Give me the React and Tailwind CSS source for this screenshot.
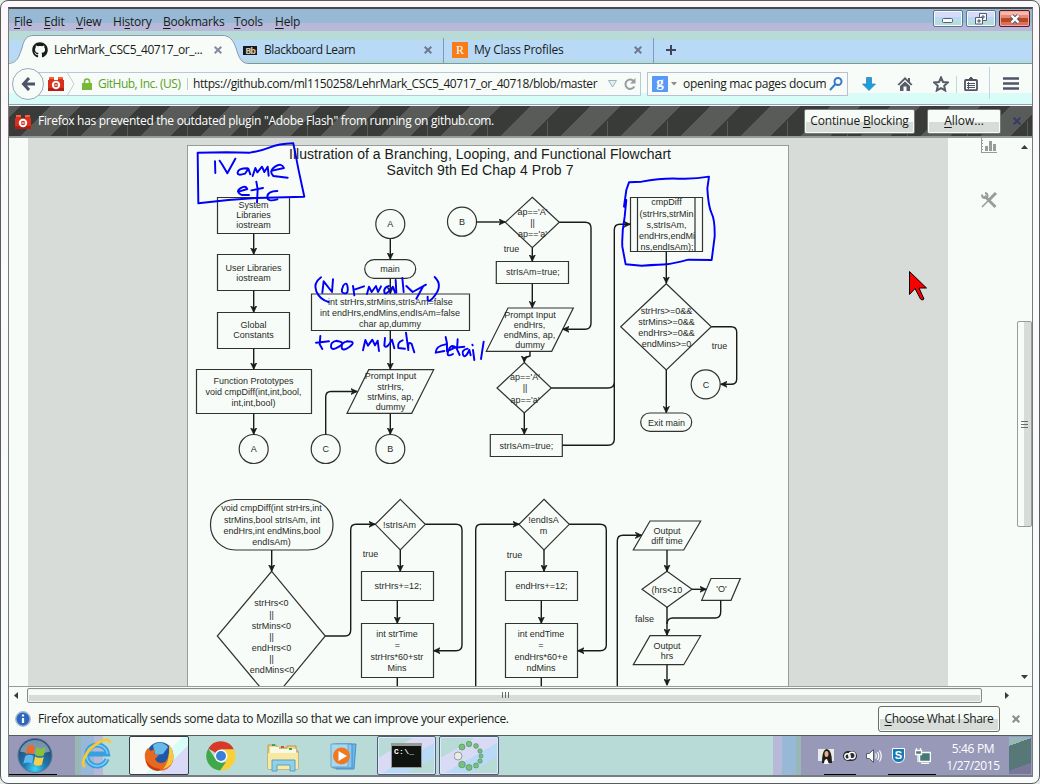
import React from "react";
import { FaGithub } from "react-icons/fa";

const menu = [
  ["File", "w-[30px]", 0],
  ["Edit", "w-[32px]", 0],
  ["View", "w-[37px]", 0],
  ["History", "w-[50px]", 2],
  ["Bookmarks", "w-[71px]", 0],
  ["Tools", "w-[41px]", 0],
  ["Help", "w-[40px]", 0],
];

function Access({ text, at }) {
  return (
    <>
      {text.slice(0, at)}
      <span className="underline underline-offset-2">{text[at]}</span>
      {text.slice(at + 1)}
    </>
  );
}

function Cross({ className }) {
  return (
    <svg viewBox="0 0 8 8" className={`h-2 w-2 shrink-0 ${className}`} fill="none" stroke="currentColor" strokeWidth="2">
      <path d="M.7 .7 7.3 7.3M7.3 .7 .7 7.3" />
    </svg>
  );
}

function Brick() {
  return (
    <svg viewBox="0 0 16 14" className="h-[14px] w-4 shrink-0">
      <path d="M1 3V1h5v2h4V1h5v2h1v11H0V3z" fill="#d8301c" />
      <path d="M1 0h5v2H1zM10 0h5v2h-5z" fill="#f86040" />
      <path d="M0 11h16v3H0z" fill="#b81c10" />
      <circle cx="8" cy="8" r="3.2" fill="#d8301c" stroke="#fff" strokeWidth="2" />
      <path d="M6.5 8h3" stroke="#fff" strokeWidth="1" />
    </svg>
  );
}

function WindowButtons() {
  return (
    <div className="flex gap-[3px]">
      <div className="flex h-[17px] w-[30px] items-center justify-center rounded-[2px] border border-[#587898] bg-[linear-gradient(#d8daf6_0_40%,#b8daf6_40%_70%,#b8dcd8_70%)] shadow-[inset_0_0_0_1px_#f0fcfc]">
        <svg viewBox="0 0 12 6" className="mt-1 h-[6px] w-3"><rect x=".5" y=".5" width="10" height="4" rx="1" fill="#f8fcf8" stroke="#585b78" /></svg>
      </div>
      <div className="flex h-[17px] w-[30px] items-center justify-center rounded-[2px] border border-[#587898] bg-[linear-gradient(#d8daf6_0_40%,#b8daf6_40%_70%,#b8dcd8_70%)] shadow-[inset_0_0_0_1px_#f0fcfc]">
        <svg viewBox="0 0 12 12" className="h-3 w-3" fill="#f8fcf8" stroke="#585b78">
          <path d="M4.500 .5h7v7h-7z M7 3h2v2H7z" fillRule="evenodd" />
          <path d="M.5 4.500h7v6.500h-7z M3 7h2v2H3z" fillRule="evenodd" />
        </svg>
      </div>
      <div className="flex h-[17px] w-[31px] items-center justify-center rounded-[2px] border border-[#581828] bg-[linear-gradient(#f8b8a8_0_25%,#e88878_25%_50%,#b84820_50%_72%,#d87060_72%)] shadow-[inset_0_0_0_1px_#f0a8a0]">
        <svg viewBox="0 0 12 10" className="h-[10px] w-3"><path d="M2.500 1.500 9.500 8.500M9.500 1.500 2.500 8.500" stroke="#585b78" strokeWidth="4.200" /><path d="M2.500 1.500 9.500 8.500M9.500 1.500 2.500 8.500" stroke="#fff" strokeWidth="2.400" /></svg>
      </div>
    </div>
  );
}

function Tabs() {
  return (
    <div className="relative h-[29px] shrink-0 bg-[linear-gradient(#b8dbd8_0_5px,#b8daf6_5px_25px,#b8dbd8_25px)] text-[12px]">
      <svg viewBox="0 0 1023 29" className="absolute left-0 top-0 h-[29px] w-[1023px]">
        <path d="M0 28.500H1023" stroke="#7098b8" />
        <path d="M0 29V27.500C9 27.500 10 21 13 13 15 4 18 .5 25 .5H213C221 .5 224 5 227 13 230 23 232 28.500 240 28.500V29Z" fill="#f8fcf8" />
        <path d="M0 28.500C9 27.500 10 21 13 13 15 4 18 .5 25 .5H213C221 .5 224 5 227 13 230 23 232 28.500 240 28.500" fill="none" stroke="#8898b8" />
        <path d="M434.500 3V28M644.500 3V28" stroke="#8098c0" />
      </svg>
      <div className="relative flex h-[29px] items-center pt-px">
        <FaGithub className="ml-[23px] h-4 w-4" />
        <span className="ml-[6px] w-[155px] whitespace-nowrap tracking-[-0.43px]">LehrMark_CSC5_40717_or_...</span>
        <Cross className="ml-[5px] text-[#8889a0]" />
        <span className="ml-[21px] flex h-[9px] w-[14px] items-center justify-center bg-[#181818] text-[9px] font-bold leading-none tracking-[-1px] text-[#d8c8a8]">Bb</span>
        <span className="ml-[7px] w-[160px] tracking-[-0.42px]">Blackboard Learn</span>
        <Cross className="text-[#707890]" />
        <span className="ml-[20px] flex h-4 w-4 items-center justify-center bg-[#f87c18] font-['Liberation_Serif',serif] text-[12px] text-white">R</span>
        <span className="ml-[6px] w-[160px] tracking-[-0.25px]">My Class Profiles</span>
        <Cross className="text-[#707890]" />
        <svg viewBox="0 0 10 10" className="ml-[24px] h-[10px] w-[10px]"><path d="M5 0V10M0 5H10" stroke="#404458" strokeWidth="2" /></svg>
      </div>
    </div>
  );
}

function Toolbar() {
  return (
    <div className="flex h-[41px] shrink-0 items-start border-b border-[#98a0b8] bg-[linear-gradient(#f8fcf8_0_29px,#d8fcf8_29px)] text-[12px]">
      <div className="z-10 ml-[3px] mt-1 flex h-[32px] w-[32px] shrink-0 items-center justify-center rounded-full border border-[#98a8c0] bg-[#f8fcf8]">
        <svg viewBox="0 0 14 14" className="h-[14px] w-[14px]" fill="none" stroke="#505468" strokeWidth="3"><path d="M8 1 2.500 7 8 13M3 7H14" /></svg>
      </div>
      <div className="-ml-[7px] mt-2 flex h-[24px] w-[604px] shrink-0 items-center border border-[#b8c8d8] bg-[#f8fcf8]">
        <div className="ml-[10px]"><Brick /></div>
        <svg viewBox="0 0 8 22" className="ml-[3px] h-[22px] w-2 shrink-0" fill="none" stroke="#c8ccd0"><path d="M.5 0 7 11 .5 22" /></svg>
        <svg viewBox="0 0 10 12" className="ml-[7px] h-3 w-[10px] shrink-0"><path d="M2.500 6V3.500a2.500 2.500 0 0 1 5 0V6" fill="none" stroke="#78b838" strokeWidth="1.600" /><path d="M0 5h10v7H0z" fill="#78b838" /></svg>
        <span className="ml-[6px] w-[89px] whitespace-nowrap tracking-[-0.5px] text-[#58a028]">GitHub, Inc. (US)</span>
        <span className="h-3 w-px bg-[#c8ccc8]" />
        <span className="ml-[5px] w-[409px] whitespace-nowrap tracking-[-0.41px]">https://github.com/ml1150258/LehrMark_CSC5_40717_or_40718/blob/master</span>
        <svg viewBox="0 0 9 8" className="ml-[6px] h-2 w-[9px] shrink-0"><path d="M.5 .5h8L4.500 7z" fill="#d8f4f4" stroke="#a8b0b8" /></svg>
        <svg viewBox="0 0 12 12" className="ml-[7px] h-3 w-3 shrink-0"><path d="M10 3.500A4.700 4.700 0 1 0 10.300 8.500" fill="none" stroke="#989ca0" strokeWidth="2" /><path d="M11.500 0V5.500H6z" fill="#989ca0" /></svg>
      </div>
      <div className="ml-[6px] mt-2 flex h-[24px] w-[201px] shrink-0 items-center overflow-hidden border border-[#b8c0d8] bg-[#f8fcf8]">
        <span className="ml-1 flex h-4 w-4 shrink-0 items-center justify-center rounded-[1px] bg-[#5898f8] pb-[3px] font-['Liberation_Serif',serif] text-[15px] font-bold leading-none text-white">g</span>
        <svg viewBox="0 0 6 4" className="ml-[3px] h-1 w-[6px] shrink-0"><path d="M0 0h6L3 3.500z" fill="#888c90" /></svg>
        <span className="ml-[6px] w-[143px] shrink-0 overflow-hidden whitespace-nowrap tracking-[-0.3px]">opening mac pages docum</span>
        <svg viewBox="0 0 14 14" className="ml-[3px] h-[14px] w-[14px] shrink-0" fill="none" stroke="#3878c8" strokeWidth="2"><circle cx="9" cy="4.500" r="3.500" /><path d="M6.500 7 1 13" /></svg>
      </div>
      <svg viewBox="0 0 14 14" className="ml-[14px] mt-[13px] h-[14px] w-[14px]"><path d="M4.500 .5h5V7H13.500L7 13.500.5 7H4.500z" fill="#18a0e0" stroke="#3878a0" strokeWidth=".7" /></svg>
      <svg viewBox="0 0 16 14" className="ml-[21px] mt-[13px] h-[14px] w-4" fill="#585b68"><path d="M8 0 .5 7.500 2 8.500 8 2.800 14 8.500 15.500 7.500 13 5V1H11V3z" /><path d="M3 9 8 4.500 13 9v5H9.500V9.500h-3V14H3z" /></svg>
      <svg viewBox="0 0 16 16" className="ml-[20px] mt-3 h-4 w-4"><path d="M8 1.500 10 6l4.800.5-3.600 3.300 1 4.700L8 12.200l-4.200 2.300 1-4.700L1.200 6.500 6 6z" fill="none" stroke="#585b68" strokeWidth="2" /></svg>
      <span className="ml-[7px] mt-3 h-[17px] w-px bg-[#b8dce0]" />
      <svg viewBox="0 0 14 14" className="ml-[7px] mt-[13px] h-[14px] w-[14px]" fill="none" stroke="#505460"><rect x="1" y="3" width="12" height="10.200" rx="1" strokeWidth="1.800" /><path d="M4.500 2.500 7 0 9.500 2.500z" fill="#505460" /><path d="M3 6.500h8M3 8.500h8M3 10.500h8M4.500 5v7" /></svg>
      <span className="ml-[11px] mt-[3px] h-[32px] w-px bg-[#c0d4e8]" />
      <svg viewBox="0 0 16 13" className="ml-[13px] mt-[13px] h-[13px] w-4"><path d="M0 1.500h16M0 6.500h16M0 11.500h16" stroke="#505468" strokeWidth="2.600" /></svg>
    </div>
  );
}

function PluginBar() {
  return (
    <div className="mt-px flex h-[32px] shrink-0 items-center border-b-2 border-[#989c98] [background:linear-gradient(90deg,transparent_58px,#585b58_58px_59px,transparent_59px)_0_100%/60px_15px_repeat-x,repeating-linear-gradient(135deg,#585b58_0_8.485px,#383b38_8.485px_29.698px,#585b58_29.698px_42.426px)] text-[12px]">
      <div className="ml-[6px] mt-px"><Brick /></div>
      <span className="ml-[7px] w-[766px] whitespace-nowrap tracking-[-0.3px] text-white">Firefox has prevented the outdated plugin "Adobe Flash" from running on github.com.</span>
      <span className="flex h-[25px] w-[111px] items-center justify-center whitespace-nowrap rounded-[2px] border border-[#787c78] bg-[linear-gradient(#f8fcf8_50%,#d8dcd8_50%)] shadow-[inset_0_0_0_1px_#f8fcf8]">
        <span className="tracking-[-0.15px]"><Access text="Continue Blocking" at={9} /></span>
      </span>
      <span className="ml-[12px] flex h-[25px] w-[74px] items-center justify-center rounded-[2px] border border-[#787c78] bg-[linear-gradient(#f8fcf8_50%,#d8dcd8_50%)] shadow-[inset_0_0_0_1px_#f8fcf8]">
        <span><Access text="Allow..." at={0} /></span>
      </span>
      <Cross className="ml-[12px] text-[#383b68]" />
    </div>
  );
}

const labels = [
  [253.5, 208, "System"], [253.5, 218, "Libraries"], [253.5, 228, "iostream"],
  [253.5, 270.5, "User Libraries"], [253.5, 280.5, "iostream"],
  [253.5, 328, "Global"], [253.5, 338, "Constants"],
  [253.5, 383.5, "Function Prototypes"], [253.5, 394.500, "void cmpDiff(int,int,bool,"], [253.5, 405.500, "int,int,bool)"],
  [253.7, 452, "A"], [325.7, 452, "C"], [390.3, 452, "B"], [390.3, 227, "A"], [462, 225, "B"],
  [390, 272, "main"],
  [390.5, 305, "int strHrs,strMins,strIsAm=false"], [390, 316, "int endHrs,endMins,endIsAm=false"], [390, 327, "char ap,dummy"],
  [390.5, 379, "Prompt Input"], [390.5, 389.500, "strHrs,"], [390.5, 399.500, "strMins, ap,"], [390.5, 410, "dummy"],
  [532.5, 215, "ap=='A'"], [532.5, 226, "||"], [532.5, 237, "ap=='a'"], [511.500, 252, "true"],
  [533, 275, "strIsAm=true;"],
  [530, 317.500, "Prompt Input"], [529.500, 327.500, "endHrs,"], [529.500, 337.500, "endMins, ap,"], [530, 348, "dummy"],
  [525, 380, "ap=='A'"], [525, 391, "||"], [525, 402.500, "ap=='a'"], [526.500, 448.500, "strIsAm=true;"],
  [666.500, 205, "cmpDiff"], [666.500, 216.500, "(strHrs,strMin"], [666.500, 227.500, "s,strIsAm,"], [667, 239, "endHrs,endMi"], [667, 250, "ns,endIsAm);"],
  [666.500, 313.500, "strHrs>=0&&"], [666.500, 324.500, "strMins>=0&&"], [666.500, 335.500, "endHrs>=0&&"], [666.500, 346.500, "endMins>=0"],
  [719.500, 349, "true"], [706, 387.500, "C"], [666.500, 425.500, "Exit main"],
  [271.500, 511, "void cmpDiff(int strHrs,int"], [272, 522.500, "strMins,bool strIsAm, int"], [272, 533.500, "endHrs,int endMins,bool"], [271.500, 544.500, "endIsAm)"],
  [271.500, 606, "strHrs<0"], [271.500, 617.500, "||"], [271.500, 628.500, "strMins<0"], [271.500, 640, "||"], [271.500, 651, "endHrs<0"], [271.500, 662, "||"], [272, 673, "endMins<0"],
  [399.500, 527.500, "!strIsAm"], [370.500, 557, "true"], [398, 588.500, "strHrs+=12;"],
  [397, 637, "int strTime"], [397.300, 648, "="], [397, 659.500, "strHrs*60+str"], [397, 671, "Mins"],
  [543.500, 522.500, "!endIsA"], [543.500, 534, "m"], [514.500, 557.500, "true"], [541.500, 588.500, "endHrs+=12;"],
  [541, 637, "int endTime"], [541, 648, "="], [541, 659.500, "endHrs*60+e"], [541, 671, "ndMins"],
  [667, 533.500, "Output"], [667, 543.500, "diff time"], [667, 592.500, "(hrs<10"], [721.500, 592, "'O'"], [644.500, 621.500, "false"],
  [667, 648.500, "Output"], [667, 658.500, "hrs"],
];

const shapes = [
  "M217.500 197.500H289.500V233.500H217.500z", "M217.500 254.500H289.500V290.500H217.500z", "M217.500 312.500H289.500V348.500H217.500z", "M196.500 369.500H311.500V413.500H196.500z",
  "M311.500 294H469.500V330.500H311.500z", "M368.700 369.700H433.700L411.700 413.300H347z",
  "M532.300 197.300 559.300 222.300 532.300 247.700 505.300 222.300z", "M496.300 261.500H568.500V283.500H496.300z",
  "M508 308H573.300L551.700 351.300H486.300z", "M524.300 362.500 551.300 388 524.300 413 497 388z", "M490.300 434.500H562.300V456.500H490.300z",
  "M630.500 197.500H702.500V251.500H630.500zM637.500 197.500V251.500M695 197.500V251.500",
  "M666.300 283.700 711.300 326.700 666.300 370 620.700 326.700z",
  "M271.700 571.300 325.300 636 271.700 701 217.300 636z", "M400.300 499.300 425.300 524.300 400.300 550 375.300 524.300z",
  "M361.500 571.500H433.500V600.500H361.500z", "M361.500 623.500H433.500V677.500H361.500z",
  "M544 499.300 569.300 524.300 544 550 519 524.300z", "M505.500 571.500H577.500V600.500H505.500z", "M505.500 623.500H577.500V677.500H505.500z",
  "M650 521H700.700L683.700 550H633.300z", "M667 571.300 692 589.300 667 607.300 642 589.300z", "M711 578.500H740.300L731 600.300H701.700z", "M650 635.700H700.700L683.700 664.700H633.300z",
];

const arrows = [
  "M253.700 233.500V254", "M253.700 290.500V312", "M253.700 348.500V369", "M253.700 413.500V434",
  "M390.300 238.500V259", "M390.300 278.500V293.500", "M390.300 330.500V369", "M390.300 413.500V434",
  "M325.700 434.500V397Q325.700 391.500 331 391.500H357", "M476.500 222H505", "M559.300 222.300H585Q591 222.300 591 228V323Q591 329.300 585 329.300H563",
  "M532.300 247.700V261", "M532.300 283.500V307.500", "M530 351.300V356L524.300 358V362", "M524.300 413V434",
  "M614.300 382V230Q614.300 224.300 620 224.300H630",
  "M666.300 251.500V283", "M711.300 326.700H731Q736.700 326.700 736.700 332V379Q736.700 384.300 731 384.300H721", "M666.300 370V412.500",
  "M271.700 550V571", "M325.300 636H345Q350.700 636 350.700 630V530Q350.700 524.300 356 524.300H375", "M425.300 524.300H456Q462 524.300 462 530V645Q462 650.700 456 650.700H434",
  "M400.300 550V571", "M397.300 600.500V623", "M475.700 686V530Q475.700 524.300 481 524.300H519", "M569.300 524.300H600Q606.300 524.300 606.300 530V645Q606.300 650.700 600 650.700H578",
  "M544 550V571", "M541.300 600.500V623", "M617.300 686V541Q617.300 535.300 623 535.300H641.500",
  "M667 550V571", "M692 589.300H706", "M667 607V635", "M667 664.700V685",
];

function Flowchart() {
  return (
    <svg viewBox="188 146 600 540" className="h-[540px] w-[600px]">
      <defs>
        <marker id="head" viewBox="0 0 10 10" refX="9" refY="5" markerWidth="7" markerHeight="7" markerUnits="userSpaceOnUse" orient="auto">
          <path d="M0 .5 9.500 5 0 9.500 3 5z" fill="#181b18" stroke="#181b18" />
        </marker>
      </defs>
      <g fill="none" stroke="#303330" strokeWidth="1.200">
        {shapes.map((d) => <path key={d} d={d} />)}
        {[[253.7, 449], [325.7, 449], [390.3, 449], [390.3, 224], [462, 221.700], [705.700, 384.300]].map(([x, y]) => <circle key={`${x}-${y}`} cx={x} cy={y} r="14.500" />)}
        <rect x="364.700" y="259.700" width="51" height="18.600" rx="9.300" />
        <rect x="640.700" y="413" width="51" height="18.300" rx="9.100" />
        <rect x="210.500" y="499.500" width="122.500" height="50.500" rx="25" />
      </g>
      <g fill="none" stroke="#181b18" strokeWidth="1.400">
        {arrows.map((d) => <path key={d} d={d} markerEnd="url(#head)" />)}
        <path d="M551.300 388H608Q614.300 388 614.300 382M562.300 445.300H608Q614.300 445.300 614.300 439V382M397.300 677.500V686M541.300 677.500V686M720.700 600.300V612Q720.700 618 715 618H673Q667 618 667 624" />
      </g>
      <g fill="#282b28" textAnchor="middle" className="font-['Liberation_Sans',sans-serif] text-[9px]">
        {labels.map(([x, y, t]) => <text key={`${x}-${y}`} x={x} y={y}>{t}</text>)}
      </g>
      <g fill="#181b18" textAnchor="middle" className="font-['Liberation_Sans',sans-serif] text-[14px]">
        <text x="480" y="158.500" textLength="382">Illustration of a Branching, Looping, and Functional Flowchart</text>
        <text x="480" y="175" textLength="187">Savitch 9th Ed Chap 4 Prob 7</text>
      </g>
    </svg>
  );
}

function Ink() {
  return (
    <svg viewBox="28 138 920 548" className="absolute left-0 top-0 h-[548px] w-[920px]" fill="none" stroke="#0000f8" strokeWidth="5.800" strokeLinecap="round" strokeLinejoin="round">
      <g transform="translate(185 140) scale(.33333)">
        <path d="M38 38 125 37 195 38Q230 32 255 22T325 10Q340 90 358 170L300 172 215 174 130 180 40 190z" />
        <path d="M90 64 91 99M104 62 112 74 127 100 151 56M187 85Q160 85 158 97T180 101L190 86 196 103M203 108 211 84 217 97 231 80 238 96 248 80 251 107M262 92 297 84Q290 67 270 80T265 108L308 113" />
        <path d="M164 154 187 147Q182 135 166 145T170 165L192 165M214 125 218 148 216 187M199 151 234 144M277 153Q248 153 247 170T277 178" />
        <path d="M408 412Q384 430 394 454T431 486M412 458 416 424 441 456 444 418M474 440 Q465 458 478 460T488 442 474 438M504 438 508 466M508 449 537 439M546 462 552 440 560 456 573 438 579 456 588 439M612 438Q596 442 598 456T624 440L630 458M632 420 634 458M652 414 656 456M664 438 683 456 723 434M715 438 694 476M749 411Q774 435 750 466T728 470" />
      </g>
      <g transform="translate(185 300) scale(.33333)">
        <path d="M406 108 404 133 412 147M393 128 432 124M456 122Q436 126 438 140T462 140 454 123M486 124Q468 128 470 142T494 140 486 124M534 151 541 120 549 137 562 119 570 136 578 122 582 153M600 114 598 137Q606 148 621 119L628 145M653 121Q636 126 640 144L660 146M663 98 670 150Q668 120 680 132L688 157" />
        <path d="M782 111 786 130 786 154M782 133Q752 138 752 158L778 153M792 151 812 142Q798 130 790 152T804 162M818 118 816 148 824 165M803 144 838 140M848 146Q828 150 834 164T853 150L857 166M864 150 868 180M862 134 863 136M896 125 888 177" />
      </g>
      <g transform="translate(475 140) scale(.33333)">
        <path d="M452 180 447 200 454 150 462 127Q480 126 500 125 560 114 610 116T702 110L697 145Q700 200 710 220T719 290L710 360 640 359Q590 372 575 373T500 377L452 373 442 320Q440 280 449 230L454 180" />
      </g>
    </svg>
  );
}

function Page() {
  return (
    <div className="flex h-[548px] shrink-0 bg-[#f8fcf8]">
      <div className="w-[19px]" />
      <div className="relative w-[920px] bg-[#d8dcd8] pl-[159px] pt-[7px]">
        <div className="h-[541px] w-[602px] border border-b-0 border-[#989c98] bg-[#f8fcf8]"><Flowchart /></div>
        <Ink />
        <svg viewBox="0 0 20 32" className="absolute left-[880px] top-[132px] h-8 w-5"><path d="M1.500 1.500V24.500L7 18.500 12.500 29Q14 31 16 29L11 18H18.500z" fill="#f80000" stroke="#000" /></svg>
      </div>
      <div className="flex w-[68px] flex-col items-end pr-[19px]">
        <svg viewBox="0 0 16 15" className="h-[15px] w-4" fill="#989c98"><path d="M0 0H1V14H16V15H0zM1 2H2V3H1zM1 5H2V6H1zM1 8H2V9H1zM1 11H2V12H1zM4 8H7V13H4zM8 3H11V13H8zM12 6H15V13H12z" /></svg>
        <svg viewBox="0 0 16 16" className="mt-[39px] h-4 w-4" fill="none" stroke="#989c98"><path d="M15 1 8.500 7.500" strokeWidth="3" /><path d="M9 7 1 15" strokeWidth="1.600" /><path d="M3.500 4 14.500 15" strokeWidth="2.800" /><path d="M1 2.500Q1 6 4 6T6.500 3.500 4 1" strokeWidth="2" /></svg>
      </div>
      <div className="flex w-[16px] flex-col items-center">
        <svg viewBox="0 0 7 4" className="mt-[7px] h-1 w-[7px]"><path d="M0 4h7L3.500 0z" fill="#383b38" /></svg>
        <div className="mt-[172px] flex h-[206px] w-[15px] items-center justify-center rounded-[2px] border border-[#989c98] bg-[linear-gradient(90deg,#f8fcf8_50%,#d8dcd8_50%)]">
          <svg viewBox="0 0 7 8" className="h-2 w-[7px]"><path d="M0 1.500h7M0 4.500h7M0 7.500h7" stroke="#686b68" /></svg>
        </div>
        <svg viewBox="0 0 7 4" className="mt-[148px] h-1 w-[7px]"><path d="M0 0h7L3.500 4z" fill="#383b38" /></svg>
      </div>
    </div>
  );
}

function BottomBars() {
  return (
    <>
      <div className="flex h-[17px] shrink-0 items-center border-t border-[#989c98] bg-[#f8fcf8]">
        <svg viewBox="0 0 4 7" className="ml-[5px] h-[7px] w-1"><path d="M4 0v7L0 3.500z" fill="#383b38" /></svg>
        <div className="ml-[9px] flex h-[15px] w-[955px] items-center justify-center rounded-[2px] border border-[#888c88] bg-[linear-gradient(#f8fcf8_45%,#d8dcd8_45%)] shadow-[inset_0_0_0_1px_#f0f4f0]">
          <svg viewBox="0 0 8 6" className="h-[6px] w-2"><path d="M1.500 0v6M4.500 0v6M7.500 0v6" stroke="#686b68" /></svg>
        </div>
        <svg viewBox="0 0 4 7" className="ml-[23px] h-[7px] w-1"><path d="M0 0v7L4 3.500z" fill="#383b38" /></svg>
      </div>
      <div className="flex h-[33px] shrink-0 items-center border-b border-[#585b58] bg-[#f8fcf8] text-[12px]">
        <svg viewBox="0 0 16 16" className="ml-[6px] h-4 w-4"><circle cx="8" cy="8" r="7.200" fill="#2868c0" stroke="#a8b4c8" strokeWidth="1.500" /><path d="M8 7v5M8 3.500v2" stroke="#fff" strokeWidth="2.200" /></svg>
        <span className="ml-[7px] w-[840px] whitespace-nowrap tracking-[-0.35px]">Firefox automatically sends some data to Mozilla so that we can improve your experience.</span>
        <span className="flex h-[26px] w-[122px] items-center justify-center whitespace-nowrap rounded-[3px] border border-[#686b68] bg-[linear-gradient(#f8fcf8_48%,#d8dcd8_48%)] shadow-[inset_0_0_0_1px_#f8fcf8]">
          <span className="tracking-[-0.38px]"><Access text="Choose What I Share" at={0} /></span>
        </span>
        <Cross className="ml-[12px] text-[#888c90]" />
      </div>
    </>
  );
}

function StartOrb() {
  return (
    <svg viewBox="0 0 38 38" className="h-[37px] w-[38px]">
      <defs><radialGradient id="orb" cx=".5" cy=".9" r=".8"><stop offset="0" stopColor="#38d8f8" /><stop offset=".4" stopColor="#2078b0" /><stop offset="1" stopColor="#284868" /></radialGradient></defs>
      <circle cx="19" cy="19" r="17.500" fill="url(#orb)" stroke="#58789a" />
      <path d="M3.500 15A16 16 0 0 1 34.500 15Q20 20 3.500 15z" fill="#b8d0e0" opacity=".55" />
      <path d="M11 10Q15 7 19 10L17.500 18Q14 15.500 9.500 18z" fill="#f06828" />
      <path d="M20.500 10.500Q25 13 30 10.500L28 19Q24 21 19 18.500z" fill="#88c040" />
      <path d="M9 19.500Q13.500 17 17.500 19.500L16 27.500Q12 25 7 27.500z" fill="#60b8f0" />
      <path d="M19 20Q23 22.500 28 20.500L26 28.500Q22 31 17.500 28z" fill="#f8d048" />
    </svg>
  );
}

function Taskbar() {
  const dots = [[15, 3, 2.800], [22, 5, 2.400], [26, 10, 2.200], [27, 15, 2], [26, 20, 2.200], [22, 24.500, 2.500], [15, 26.500, 3], [8, 23.500, 3.300], [8, 6, 3]];
  return (
    <div className="relative flex h-[40px] shrink-0 border-b border-[#787c88] bg-[linear-gradient(90deg,#9898b8_0_66px,#98b8b8_66px_72px,#98b8d8_72px_85px,#b8b8d8_85px_94px,#b8dbd8_94px_764px,#b8b8d8_764px_773px,#98b8d8_773px_787px,#98b8b8_787px_792px,#9898b8_792px)]">
      <div className="ml-[7px] mt-px w-[65px]"><StartOrb /></div>
      <svg viewBox="0 0 32 32" className="mt-[2px] h-8 w-8">
        <path d="M26 21A10.500 10.500 0 1 1 26.500 16H8" fill="none" stroke="#38a0e0" strokeWidth="5" />
        <path d="M26 21A10.500 10.500 0 1 1 26.500 16" fill="none" stroke="#80d0f8" strokeWidth="1.500" />
        <path d="M4 29C-1 26 5 13 14 7 22 1 29 0 29 5" fill="none" stroke="#f8c830" strokeWidth="2.800" />
      </svg>
      <div className="ml-[16px] flex h-[39px] w-[60px] items-center justify-center rounded-[2px] border border-[#383b48] bg-[linear-gradient(135deg,#f8fcf8_55%,#d8fcf8_55%_70%,#d8daf6_70%)]">
        <svg viewBox="0 0 32 32" className="h-8 w-8">
          <circle cx="17" cy="15" r="13" fill="#2058a8" /><path d="M10 5Q18-1 25 7L20 14 12 15z" fill="#68b8e8" />
          <path d="M26 5Q32 13 30 21 27 31 15 31 3 30 2 18 1 12 5 8L8 11 12 9 11 14 16 15 12 19Q15 25 22 22 27 18 26 5z" fill="#e86820" />
          <path d="M26 5Q33 13 29 23 25 28 20 29 27 22 26 5z" fill="#f8c840" /><path d="M3 20Q7 28 18 29L15 31Q4 29 3 20z" fill="#c83818" />
        </svg>
      </div>
      <svg viewBox="0 0 30 30" className="ml-[17px] mt-[5px] h-[30px] w-[30px]">
        <path d="M15 15 2.300 7.500A14.500 14.500 0 0 1 28 8.500H15z" fill="#d83828" /><path d="M15 8.500H28A14.500 14.500 0 0 1 14 29.500L21 18z" fill="#f8d038" /><path d="M2.300 7.500 9.500 18 15 22 20 21 14 29.500A14.500 14.500 0 0 1 2.300 7.500z" fill="#40a848" />
        <circle cx="15" cy="15" r="6.500" fill="#f8fcf8" /><circle cx="15" cy="15" r="5" fill="#3880d8" />
      </svg>
      <svg viewBox="0 0 32 30" className="ml-[31px] mt-[6px] h-[30px] w-8">
        <path d="M1 3H9L11 6H20V4H29V9H31V27H1z" fill="#f0d888" stroke="#b89848" /><path d="M3 5H12V7H29V11H3z" fill="#f8f8e8" /><path d="M1 11H31V27H1z" fill="#f8e8a0" />
        <path d="M5 3h3M14 5h3M22 7h3" stroke="#38a858" strokeWidth="2" /><path d="M14 5h3" stroke="#e05028" strokeWidth="2" />
        <path d="M5 29V18H28V29H23V23H10V29z" fill="#90d0e8" stroke="#58a0c8" />
      </svg>
      <svg viewBox="0 0 30 28" className="ml-[31px] mt-[7px] h-7 w-[30px]">
        <path d="M6 1H26L24 26H6z" fill="#68b8e8" stroke="#4890c8" /><path d="M3 1H22V25H3z" fill="#88c8f0" stroke="#4890c8" /><path d="M1 1H18V24H1z" fill="#a8d8f0" stroke="#68a8d0" />
        <circle cx="11.500" cy="13" r="8.500" fill="#f07820" /><path d="M8.500 8 17 13 8.500 18z" fill="#fff" />
      </svg>
      <div className="ml-[17px] flex h-[39px] w-[59px] items-center justify-center rounded-[2px] border border-[#585b78] bg-[linear-gradient(150deg,#b8dbd8_0_30%,#d8daf6_30%_55%,#b8daf6_55%_75%,#b8dbd8_75%)] shadow-[inset_0_0_0_1px_#d8ecf8]">
        <div className="h-[25px] w-[31px] border border-[#989c98] border-t-[3px] bg-[#101410] pl-[2px] pt-px font-['Liberation_Mono',monospace] text-[8px] font-bold leading-[9px] tracking-[0.3px] text-white">C:\_</div>
      </div>
      <div className="ml-[3px] flex h-[39px] w-[60px] items-center justify-center rounded-[2px] border border-[#585b78] bg-[linear-gradient(150deg,#b8dbd8_0_30%,#d8daf6_30%_55%,#b8daf6_55%_75%,#b8dbd8_75%)] shadow-[inset_0_0_0_1px_#d8ecf8]">
        <svg viewBox="0 0 30 30" className="h-[30px] w-[30px]">
          {dots.map(([x, y, r]) => <circle key={`${x}-${y}`} cx={x} cy={y} r={r} fill="#78c080" stroke="#488858" strokeWidth=".6" />)}
          <circle cx="4" cy="15" r="4" fill="#e8ece8" stroke="#888c88" strokeWidth=".8" />
        </svg>
      </div>
      <div className="ml-[319px] flex items-center gap-[7px]">
        <svg viewBox="0 0 16 16" className="h-4 w-4"><path d="M0 1H16V13H0z" fill="#e8ece8" /><path d="M4 15Q4 1 9 1 14 2 14 15z" fill="#201c18" /><ellipse cx="8.500" cy="6" rx="2" ry="3" fill="#e0b090" /><path d="M6 16Q6 11 9 11L11 16z" fill="#f8fcf8" /></svg>
        <svg viewBox="0 0 16 12" className="ml-px h-3 w-4" fill="none"><rect x="1" y="1" width="14" height="10" rx="5" fill="#282b30" /><circle cx="5.500" cy="6.500" r="2.700" stroke="#fff" strokeWidth="1.400" /><circle cx="10" cy="5.500" r="3.200" stroke="#fff" strokeWidth="1.400" /></svg>
        <svg viewBox="0 0 16 14" className="ml-px h-[14px] w-4"><path d="M.5 4.500H3.500L7.500 .5V13.500L3.500 9.500H.5z" fill="#f8fcf8" stroke="#585b68" /><path d="M9.500 4.500Q11 7 9.500 9.500M11.500 3Q14 7 11.500 11M13.500 1.500Q17 7 13.500 12.500" fill="none" stroke="#f8fcf8" strokeWidth="1.200" /></svg>
        <span className="ml-[3px] flex h-[15px] w-[13px] items-center justify-center rounded-b-[6px] border border-white bg-[#1878b8] font-['Liberation_Sans',sans-serif] text-[11px] font-bold text-white">S</span>
        <svg viewBox="0 0 16 16" className="ml-[3px] h-4 w-4"><path d="M4.500 4.500H15.500V13.500H4.500z" fill="#487878" stroke="#f8fcf8" strokeWidth="1.500" /><path d="M6 15.500H14M1.500 0V3M5.500 0V3M.5 2.500H6.500V6.500H.5zM3 6.500V14" fill="#587878" stroke="#f8fcf8" strokeWidth="1.300" /></svg>
      </div>
      <div className="ml-[13px] flex w-[58px] flex-col items-center pt-[4px] text-[12px] leading-[17px] tracking-[-0.35px] text-white"><span>5:46 PM</span><span className="whitespace-nowrap">1/27/2015</span></div>
      <div className="ml-auto h-[39px] w-[24px] border border-[#9898c8] bg-[linear-gradient(160deg,#98b8b8_0_20%,#587878_20%_75%,#787898_75%)]" />
      <div className="absolute bottom-0 left-0 h-px w-12 bg-black" />
      <div className="absolute bottom-0 left-[815px] h-px w-8 bg-black" />
      <div className="absolute bottom-0 left-[879px] h-px w-12 bg-black" />
    </div>
  );
}

export default function App() {
  return (
    <div className="h-[784px] w-[1040px] overflow-hidden bg-[#e8ece8] font-['Open_Sans',sans-serif] text-[#181b18]">
      <div className="h-[784px] w-[1040px] rounded-[8px] border border-[#585b58] bg-[linear-gradient(#fcf8fc,#f8fcfc)] p-[7px] pt-[6px]">
        <div className="flex h-[770px] w-[1025px] flex-col overflow-hidden border border-[#787b78] border-t-[2px] border-t-[#484b48] bg-[#f8fcf8]">
          <div className="flex h-[26px] shrink-0 justify-between bg-[linear-gradient(#98b9d6_0_14px,#b8b8d8_14px_22px,#b8dbd8_22px)] pr-[2px] pt-px text-[12px]">
            <div className="flex pl-[5px] pt-[3px] leading-[17px] tracking-[-0.2px]">
              {menu.map(([t, w, at]) => <span key={t} className={w}><Access text={t} at={at} /></span>)}
            </div>
            <WindowButtons />
          </div>
          <Tabs />
          <Toolbar />
          <PluginBar />
          <Page />
          <BottomBars />
          <Taskbar />
        </div>
      </div>
    </div>
  );
}
